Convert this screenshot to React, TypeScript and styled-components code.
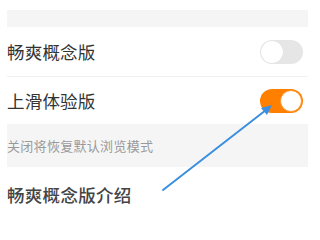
import React from "react";
import styled, { createGlobalStyle } from "styled-components";

const Global = createGlobalStyle`
  html, body {
    margin: 0;
    padding: 0;
    background: #ffffff;
  }
  body {
    font-family: "Noto Sans CJK SC", "Noto Sans", sans-serif;
  }
`;

const Page = styled.div`
  position: relative;
  width: 320px;
  height: 240px;
  overflow: hidden;
  background: #ffffff;
`;

const List = styled.div`
  display: flex;
  flex-direction: column;
  margin-left: 7px;
  width: 301px;
  padding-top: 10px;
`;

const Band = styled.div<{ $h: number }>`
  height: ${(p) => p.$h}px;
  background: #f5f5f5;
  display: flex;
  align-items: center;
`;

const Row = styled.div<{ $h: number; $line?: boolean }>`
  height: ${(p) => p.$h}px;
  display: flex;
  align-items: center;
  justify-content: space-between;
  padding-right: 5px;
  border-bottom: ${(p) => (p.$line ? "1px solid #f0f0f0" : "none")};
`;

const Label = styled.span`
  font-size: 17.5px;
  color: #333333;
  letter-spacing: 0.2px;
`;

const Note = styled.span`
  font-size: 13px;
  color: #9a9a9a;
  letter-spacing: 0.3px;
`;

const Title = styled.span`
  font-size: 17.5px;
  color: #444444;
  font-weight: 500;
  letter-spacing: 0.3px;
`;

const Toggle = styled.div<{ $on?: boolean }>`
  width: 43px;
  height: 24px;
  border-radius: 12px;
  box-sizing: border-box;
  background: ${(p) => (p.$on ? "#ff7f00" : "#e6e6e6")};
  display: flex;
  align-items: center;
  justify-content: ${(p) => (p.$on ? "flex-end" : "flex-start")};
  padding: 1px;
`;

const Knob = styled.div<{ $on?: boolean }>`
  width: 22px;
  height: 22px;
  border-radius: 50%;
  box-sizing: border-box;
  background: #ffffff;
  border: ${(p) => (p.$on ? "1.5px solid #ff9a30" : "none")};
  box-shadow: ${(p) => (p.$on ? "none" : "0 0 1px rgba(0,0,0,0.08)")};
`;

const Arrow = styled.svg`
  position: absolute;
  left: 0;
  top: 0;
  pointer-events: none;
`;

const Switch = ({ on }: { on?: boolean }) => (
  <Toggle $on={on}>
    <Knob $on={on} />
  </Toggle>
);

export default function App() {
  return (
    <Page>
      <Global />
      <List>
        <Band $h={17} />
        <Row $h={49} $line>
          <Label>畅爽概念版</Label>
          <Switch />
        </Row>
        <Row $h={47}>
          <Label>上滑体验版</Label>
          <Switch on />
        </Row>
        <Band $h={43}>
          <Note>关闭将恢复默认浏览模式</Note>
        </Band>
        <Row $h={54}>
          <Title>畅爽概念版介绍</Title>
        </Row>
      </List>
      <Arrow width="320" height="240" viewBox="0 0 320 240">
        <line x1="163" y1="190" x2="266" y2="110" stroke="#3b8fe0" strokeWidth="2" strokeLinecap="round" />
        <polygon points="272,105 261,108 267,115" fill="#3b8fe0" />
      </Arrow>
    </Page>
  );
}
